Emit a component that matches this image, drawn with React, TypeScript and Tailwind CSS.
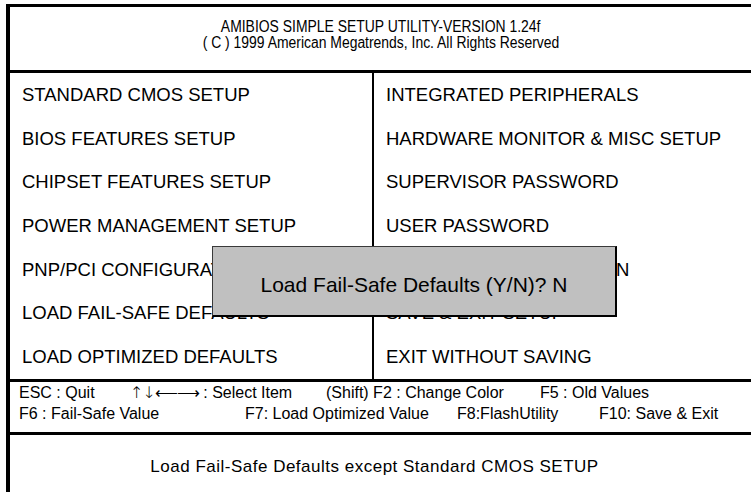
export default function App() {
  const left = [
    "STANDARD CMOS SETUP",
    "BIOS FEATURES SETUP",
    "CHIPSET FEATURES SETUP",
    "POWER MANAGEMENT SETUP",
    "PNP/PCI CONFIGURATION",
    "LOAD FAIL-SAFE DEFAULTS",
    "LOAD OPTIMIZED DEFAULTS",
  ];
  const right = [
    "INTEGRATED PERIPHERALS",
    "HARDWARE MONITOR & MISC SETUP",
    "SUPERVISOR PASSWORD",
    "USER PASSWORD",
    "IDE HDD AUTO DETECTION",
    "SAVE & EXIT SETUP",
    "EXIT WITHOUT SAVING",
  ];
  return (
    <div className="w-[751px] h-[492px] bg-white overflow-hidden text-black font-['Liberation_Sans',Arial,sans-serif]">
      <div className="ml-[6px] mt-[4px] w-[745px] h-[488px] border-l-4 border-t-[3px] border-black flex flex-col">
        {/* header */}
        <div className="h-[63px] pt-[12px] flex flex-col items-center text-[16px] leading-[16px]">
          <div className="scale-x-[0.87] whitespace-nowrap">AMIBIOS SIMPLE SETUP UTILITY-VERSION 1.24f</div>
          <div className="scale-x-[0.87] whitespace-nowrap">( C ) 1999 American Megatrends, Inc. All Rights Reserved</div>
        </div>
        <div className="h-[3px] bg-black shrink-0" />
        {/* menu */}
        <div className="relative h-[306px] shrink-0 grid grid-cols-[362px_2px_1fr] text-[18.5px] leading-[20px]">
          <div className="grid grid-rows-7 pl-[12px]">
            {left.map((t) => (
              <div key={t} className="flex items-center whitespace-nowrap">{t}</div>
            ))}
          </div>
          <div className="bg-black" />
          <div className="grid grid-rows-7 pl-[12px]">
            {right.map((t) => (
              <div key={t} className="flex items-center whitespace-nowrap">{t}</div>
            ))}
          </div>
          <div className="absolute left-[202px] top-[173px] w-[405px] h-[71px] bg-[#c0c0c0] border border-[#3a3a3a] border-r-2 border-b-2 border-r-black border-b-black flex items-center justify-center pt-[7px] text-[21px] leading-[24px] whitespace-nowrap">
            Load Fail-Safe Defaults (Y/N)? N
          </div>
        </div>
        <div className="h-[3px] bg-black shrink-0" />
        {/* legend */}
        <div className="h-[50px] shrink-0 pl-[9px] whitespace-nowrap text-[16px] leading-[21px]">
          <div className="flex items-baseline">
            <span className="w-[111px] shrink-0">ESC : Quit</span>
            <span className="w-[196px] shrink-0">
              <span className="font-['DejaVu_Sans',sans-serif] font-light tracking-[-1px]">↑↓⟵⟶</span> : Select Item
            </span>
            <span className="w-[214px] shrink-0">(Shift) F2 : Change Color</span>
            <span>F5 : Old Values</span>
          </div>
          <div className="flex">
            <span className="w-[226px] shrink-0">F6 : Fail-Safe Value</span>
            <span className="w-[212px] shrink-0">F7: Load Optimized Value</span>
            <span className="w-[142px] shrink-0">F8:FlashUtility</span>
            <span>F10: Save &amp; Exit</span>
          </div>
        </div>
        <div className="h-[3px] bg-black shrink-0" />
        {/* status */}
        <div className="pt-[22px] pr-[12px] text-center text-[17px] leading-[20px] tracking-[0.5px] whitespace-nowrap">
          Load Fail-Safe Defaults except Standard CMOS SETUP
        </div>
      </div>
    </div>
  );
}
